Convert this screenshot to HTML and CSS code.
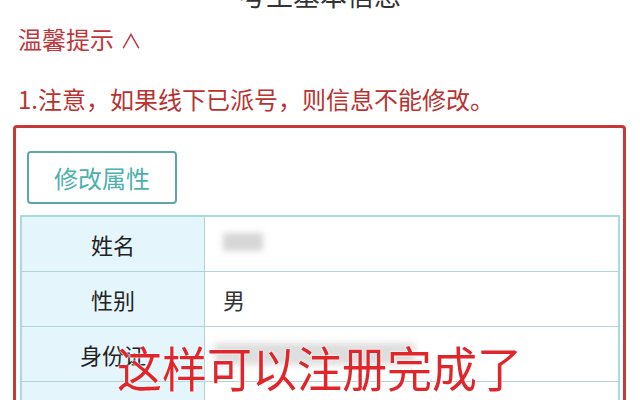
FILE: index.html
```html
<!DOCTYPE html>
<html lang="zh-CN">
<head>
<meta charset="utf-8">
<link rel="stylesheet" href="styles.css">
</head>
<body>
<div class="page">
  <div class="title">考生基本信息</div>
  <div class="tips-head">温馨提示 <span class="caret">∧</span></div>
  <div class="tip">1.注意，如果线下已派号，则信息不能修改。</div>
  <div class="frame">
    <div class="btn">修改属性</div>
    <div class="table">
      <div class="row">
        <div class="label">姓名</div>
        <div class="value"><span class="blur blur-name"></span></div>
      </div>
      <div class="row">
        <div class="label">性别</div>
        <div class="value">男</div>
      </div>
      <div class="row">
        <div class="label">身份证</div>
        <div class="value"><span class="blur blur-id"></span></div>
      </div>
      <div class="row">
        <div class="label">手机号</div>
        <div class="value"><span class="blur blur-phone"></span></div>
      </div>
    </div>
  </div>
  <div class="overlay">这样可以注册完成了</div>
</div>
</body>
</html>
```
FILE: styles.css
```css
html, body {
  margin: 0;
  padding: 0;
  background: #ffffff;
}
body {
  width: 640px;
  height: 400px;
  overflow: hidden;
  font-family: "Noto Sans CJK SC", "Noto Sans", sans-serif;
}
.page {
  position: relative;
  height: 400px;
  overflow: hidden;
}
.title {
  margin-top: -20px;
  height: 30px;
  line-height: 30px;
  font-size: 27px;
  text-align: center;
  color: #333333;
}
.tips-head {
  margin-top: 14px;
  padding-left: 18px;
  height: 30px;
  line-height: 30px;
  font-size: 24px;
  color: #c0363b;
}
.caret {
  display: inline-block;
  font-size: 20px;
  margin-left: 2px;
  transform: scaleX(1.1);
}
.tip {
  margin-top: 30px;
  padding-left: 18px;
  height: 30px;
  line-height: 30px;
  font-size: 24px;
  color: #b83230;
  letter-spacing: 0;
}
.frame {
  margin: 11px 14px 0 13px;
  border: 3px solid #c43a37;
  border-radius: 4px;
  border-bottom: none;
  height: 300px;
  padding: 23px 3px 0 4px;
}
.btn {
  margin-left: 7px;
  width: 146px;
  height: 49px;
  border: 2px solid #5aa9a8;
  border-radius: 4px;
  color: #4db0ac;
  font-size: 24px;
  line-height: 49px;
  text-align: center;
}
.table {
  margin-top: 11px;
  width: 596px;
  border: 2px solid #a7dcdf;
  border-bottom: none;
}
.row {
  display: flex;
  box-sizing: border-box;
  height: 55px;
  border-bottom: 1.5px solid #b3d3da;
}
.label {
  width: 182px;
  background: #e4f6fc;
  border-right: 1.5px solid #b3d3da;
  display: flex;
  align-items: center;
  justify-content: center;
  font-size: 22px;
  color: #222222;
}
.value {
  flex: 1;
  display: flex;
  align-items: center;
  padding-left: 18px;
  font-size: 22px;
  color: #333333;
}
.blur {
  display: block;
  background: #d6d6d6;
  filter: blur(3px);
}
.blur-name {
  width: 40px;
  height: 18px;
  margin-top: -4px;
}
.blur-id {
  width: 200px;
  height: 22px;
  margin-left: -8px;
  background: #dedede;
}
.blur-phone {
  width: 160px;
  height: 20px;
  margin-left: 6px;
  margin-top: 26px;
}
.overlay {
  position: absolute;
  left: 117px;
  top: 335px;
  font-size: 45px;
  line-height: 60px;
  color: #e0262a;
  transform: scaleY(1.06);
  transform-origin: top left;
  text-shadow: 0 0 2px #ffffff, 0 0 2px #ffffff;
}
```
